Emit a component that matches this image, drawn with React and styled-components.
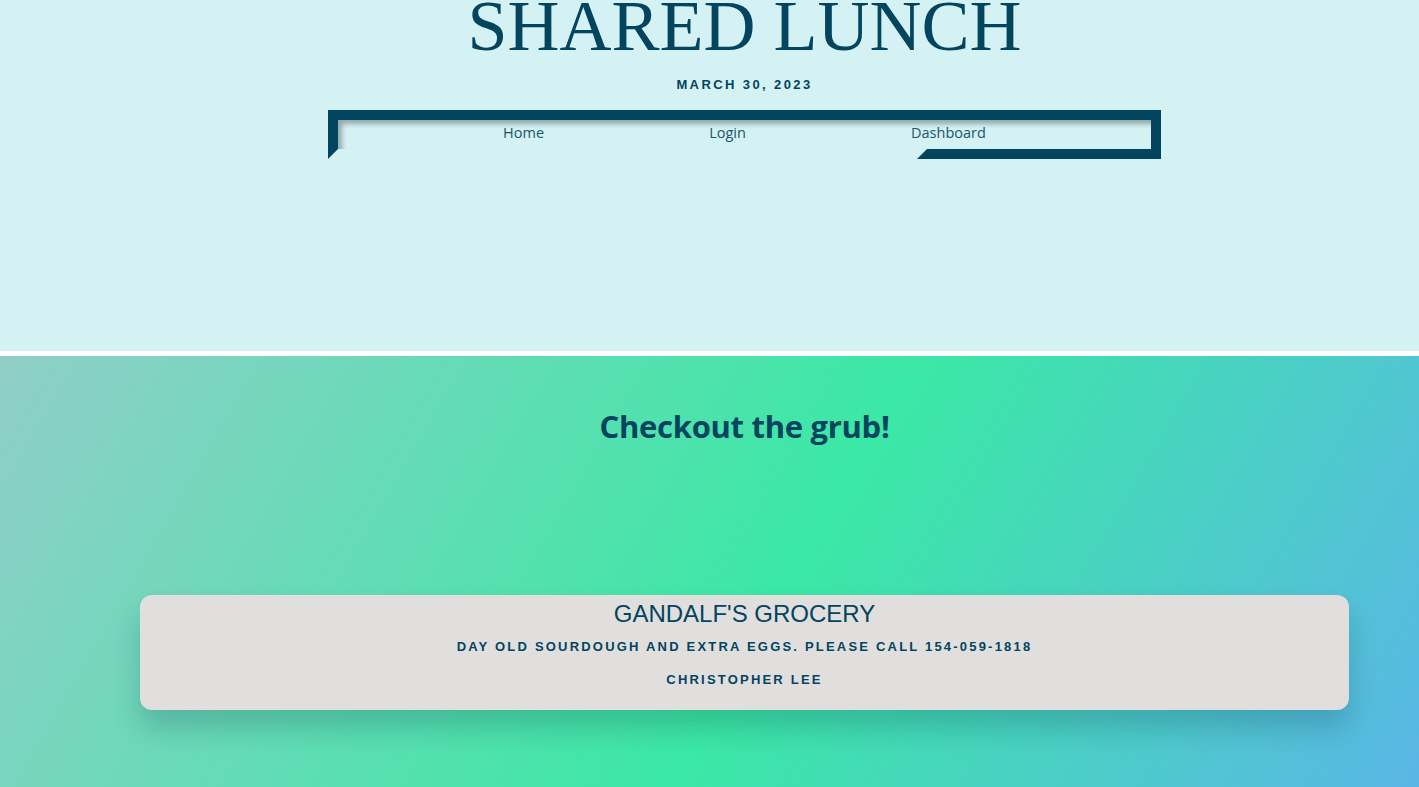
import React from "react";
import styled, { createGlobalStyle } from "styled-components";

const Global = createGlobalStyle`
  html, body { margin: 0; padding: 0; background: #ffffff; }
  body { font-family: "Liberation Sans", Arial, sans-serif; overflow: hidden; }
  * { box-sizing: border-box; }
`;

const Header = styled.header`
  height: 351px;
  background: #d4f1f4;
  padding-left: 70px;
  display: flex;
  flex-direction: column;
  align-items: center;
  overflow: hidden;
`;

const Title = styled.h1`
  margin: -10px 0 0;
  font-family: "Liberation Serif", "Times New Roman", serif;
  font-weight: 400;
  font-size: 72px;
  line-height: 72px;
  color: #03445e;
  white-space: nowrap;
`;

const Caps = styled.p`
  margin: ${(p) => p.$mt || 0}px 0 0;
  font-family: "Liberation Sans", Arial, sans-serif;
  font-weight: 700;
  font-size: 13px;
  line-height: 16px;
  letter-spacing: ${(p) => p.$ls || 2.4}px;
  text-transform: uppercase;
  color: #03445e;
  text-align: center;
`;

const Nav = styled.nav`
  position: relative;
  margin-top: 17.5px;
  width: 833px;
  height: 49px;
  border: 10px solid #03445e;
  border-bottom-color: transparent;
  background: transparent;
  box-shadow: inset 4px 4px 5px rgba(0, 0, 0, 0.3);
  display: flex;
  justify-content: space-evenly;
  align-items: center;
  padding-bottom: 3px;

  &::after {
    content: "";
    position: absolute;
    right: -10px;
    bottom: -10px;
    width: 244px;
    height: 10px;
    background: #03445e;
    clip-path: polygon(10px 0, 100% 0, 100% 100%, 0 100%);
  }
`;

const NavLink = styled.a`
  font-family: "Open Sans", "Noto Sans", sans-serif;
  font-size: 14.5px;
  color: #1d5569;
  text-decoration: none;
  line-height: 20px;
`;

const Section = styled.section`
  margin-top: 5px;
  min-height: 431px;
  padding: 51px 0 80px 70px;
  background: linear-gradient(120deg, #90cec8 0%, #3be8a5 55%, #5ab6e6 100%);
`;

const Heading = styled.h2`
  margin: 0;
  text-align: center;
  font-family: "Open Sans", "Noto Sans", sans-serif;
  font-weight: 700;
  font-size: 31px;
  line-height: 38.4px;
  letter-spacing: -0.3px;
  color: #03445e;
`;

const Card = styled.article`
  margin: 150px 70px 0;
  background: #e0dfdd;
  border-radius: 12px;
  padding: 5px 20px 21.5px;
  box-shadow: 0 18px 28px rgba(0, 40, 60, 0.2);
  text-align: center;
`;

const CardTitle = styled.h3`
  margin: 0;
  font-family: "Liberation Sans", Arial, sans-serif;
  font-weight: 400;
  font-size: 24px;
  line-height: 27.6px;
  color: #03445e;
`;

export default function App() {
  return (
    <>
      <Global />
      <Header>
        <Title>SHARED LUNCH</Title>
        <Caps $mt={14.5}>March 30, 2023</Caps>
        <Nav>
          <NavLink href="#">Home</NavLink>
          <NavLink href="#">Login</NavLink>
          <NavLink href="#">Dashboard</NavLink>
        </Nav>
      </Header>
      <Section>
        <Heading>Checkout the grub!</Heading>
        <Card>
          <CardTitle>GANDALF'S GROCERY</CardTitle>
          <Caps $mt={11} $ls={2.2}>Day old sourdough and extra eggs. Please call 154-059-1818</Caps>
          <Caps $mt={17} $ls={2.2}>Christopher Lee</Caps>
        </Card>
      </Section>
    </>
  );
}
